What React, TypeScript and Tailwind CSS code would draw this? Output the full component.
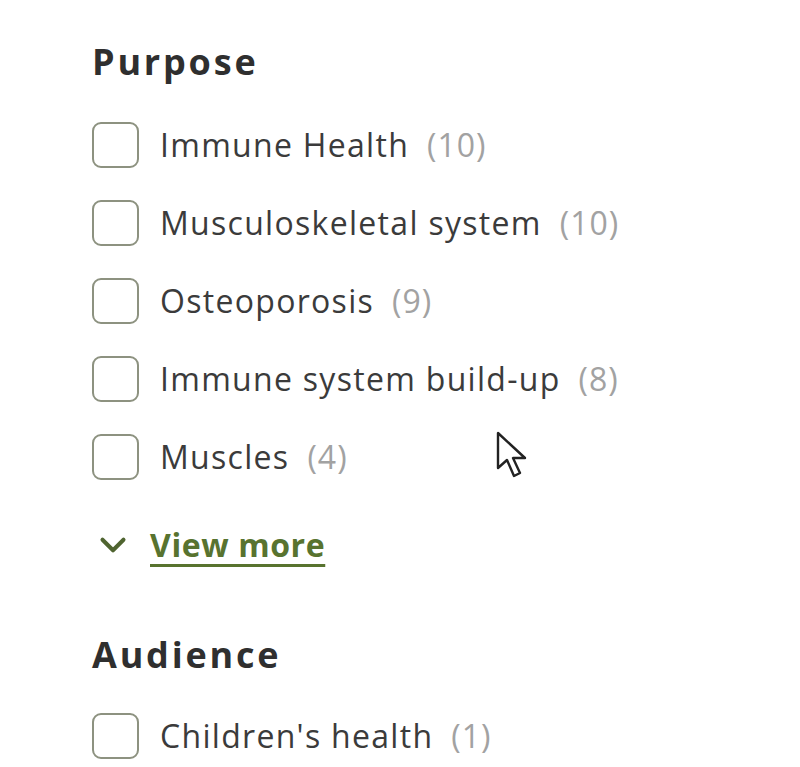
import { ChevronDown } from "lucide-react";

type Option = { label: string; count: number };

const purpose: Option[] = [
  { label: "Immune Health", count: 10 },
  { label: "Musculoskeletal system", count: 10 },
  { label: "Osteoporosis", count: 9 },
  { label: "Immune system build-up", count: 8 },
  { label: "Muscles", count: 4 },
];

const audience: Option[] = [{ label: "Children's health", count: 1 }];

const FilterRow = ({ option }: { option: Option }) => {
  return (
    <label className="flex items-center h-[78px] cursor-pointer">
      <span className="w-[47px] h-[46px] rounded-[9px] border-[2.5px] border-[#8d9280] bg-white shrink-0" />
      <span className="ml-[21px] text-[32px] text-[#3b3b3b] tracking-[1.3px]">
        {option.label}
      </span>
      <span className="ml-[18px] text-[32px] text-[#a2a2a2] tracking-[1px]">
        ({option.count})
      </span>
    </label>
  );
};

const Heading = ({ children, className }: { children: string; className?: string }) => {
  return (
    <h3
      className={`text-[36px] font-bold text-[#2f2f2f] leading-[44px] tracking-[2.8px] ${className ?? ""}`}
    >
      {children}
    </h3>
  );
};

const App = () => {
  return (
    <div
      className="relative w-[800px] h-[767px] bg-white overflow-hidden pl-[92px] pt-[40px]"
      style={{ fontFamily: '"Open Sans", "Noto Sans", sans-serif' }}
    >
      <Heading>Purpose</Heading>
      <div className="mt-[22px] flex flex-col">
        {purpose.map((option, index) => (
          <FilterRow key={index} option={option} />
        ))}
      </div>
      <button className="mt-[25px] flex items-center gap-[16px] text-[#58732f]">
        <ChevronDown size={42} strokeWidth={2.3} className="text-[#4f6430]" />
        <span className="text-[32px] font-bold tracking-[0.6px] underline underline-offset-[7px] decoration-[3px]">
          View more
        </span>
      </button>
      <Heading className="mt-[64px]">Audience</Heading>
      <div className="mt-[20px] flex flex-col">
        {audience.map((option, index) => (
          <FilterRow key={index} option={option} />
        ))}
      </div>

      <svg
        className="absolute left-[495px] top-[430px]"
        width="36"
        height="52"
        viewBox="0 0 36 52"
      >
        <path
          d="M3 3 L3 38 L12 30 L19 46 L25 43 L18 28 L30 28 Z"
          fill="white"
          stroke="#222"
          strokeWidth="2.4"
          strokeLinejoin="round"
        />
      </svg>
    </div>
  );
};

export default App;
